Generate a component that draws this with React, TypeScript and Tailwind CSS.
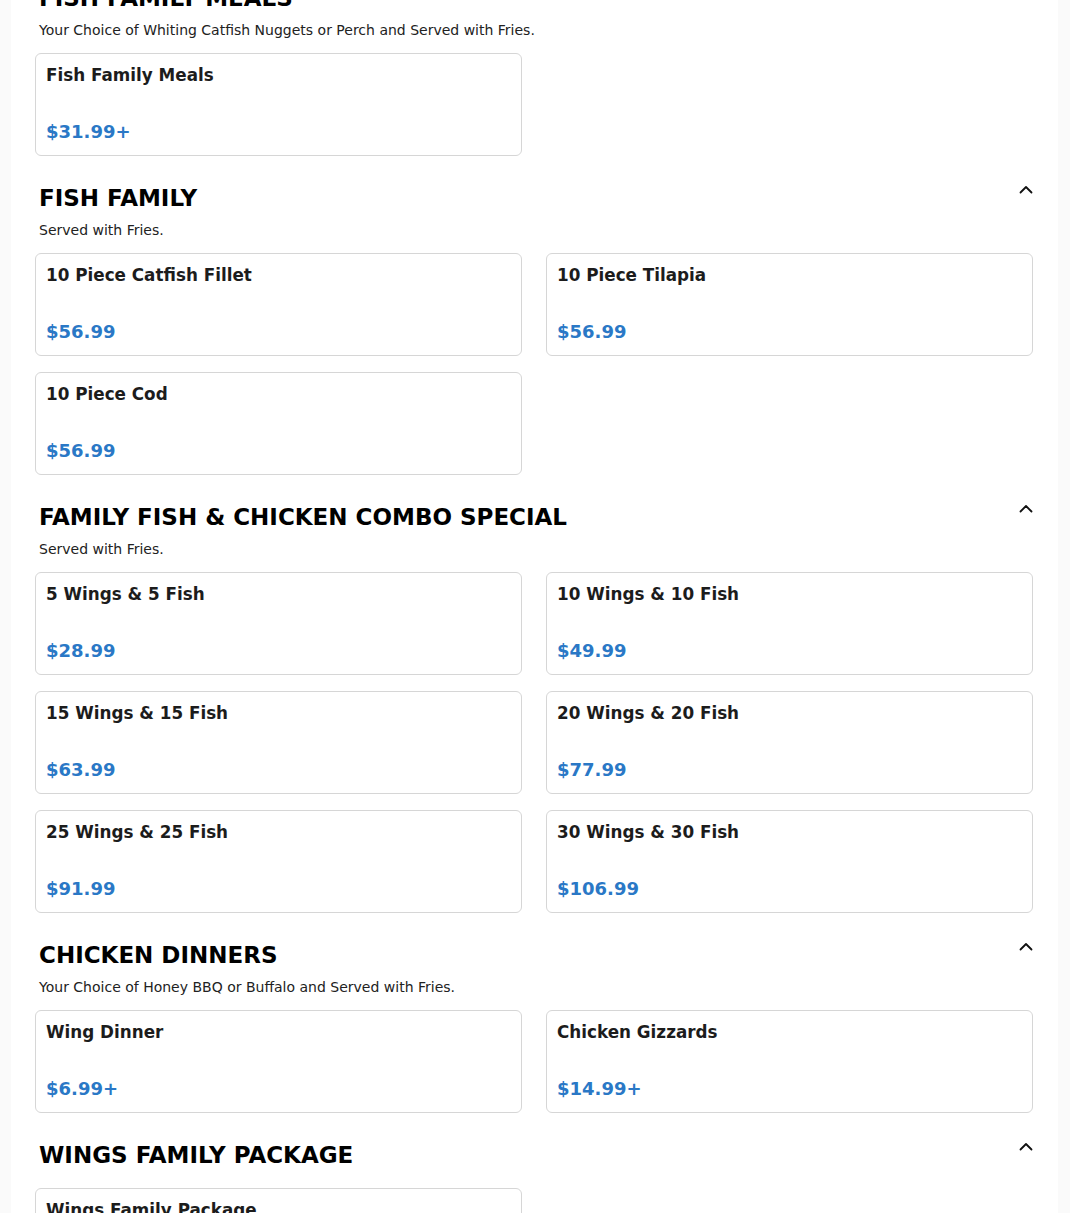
import React from "react";

type Item = { name: string; price: string };
type Section = { title: string; desc?: string; items: Item[] };

const sections: Section[] = [
  {
    title: "FISH FAMILY MEALS",
    desc: "Your Choice of Whiting Catfish Nuggets or Perch and Served with Fries.",
    items: [{ name: "Fish Family Meals", price: "$31.99+" }],
  },
  {
    title: "FISH FAMILY",
    desc: "Served with Fries.",
    items: [
      { name: "10 Piece Catfish Fillet", price: "$56.99" },
      { name: "10 Piece Tilapia", price: "$56.99" },
      { name: "10 Piece Cod", price: "$56.99" },
    ],
  },
  {
    title: "FAMILY FISH & CHICKEN COMBO SPECIAL",
    desc: "Served with Fries.",
    items: [
      { name: "5 Wings & 5 Fish", price: "$28.99" },
      { name: "10 Wings & 10 Fish", price: "$49.99" },
      { name: "15 Wings & 15 Fish", price: "$63.99" },
      { name: "20 Wings & 20 Fish", price: "$77.99" },
      { name: "25 Wings & 25 Fish", price: "$91.99" },
      { name: "30 Wings & 30 Fish", price: "$106.99" },
    ],
  },
  {
    title: "CHICKEN DINNERS",
    desc: "Your Choice of Honey BBQ or Buffalo and Served with Fries.",
    items: [
      { name: "Wing Dinner", price: "$6.99+" },
      { name: "Chicken Gizzards", price: "$14.99+" },
    ],
  },
  {
    title: "WINGS FAMILY PACKAGE",
    items: [{ name: "Wings Family Package", price: "$39.99+" }],
  },
];

function Chevron() {
  return (
    <svg width="16" height="16" viewBox="0 0 16 16" fill="none" className="-mr-[1px] -mt-[2px] shrink-0">
      <path d="M2.5 10.5 L8 5 L13.5 10.5" stroke="#111" strokeWidth="1.8" strokeLinecap="round" strokeLinejoin="round" />
    </svg>
  );
}

function Card({ item }: { item: Item }) {
  return (
    <div className="flex h-[103px] flex-col justify-between rounded-[6px] border border-[#d6d6d6] bg-white pl-[10px] pr-[10px] pt-[10px] pb-[11px]">
      <div className="text-[16.8px] font-bold leading-[22px] text-[#1c1c1c]">{item.name}</div>
      <div className="text-[18px] font-bold leading-[24px] text-[#2a78c6]">{item.price}</div>
    </div>
  );
}

export default function App() {
  return (
    <div className="min-h-screen bg-[#fafafa]" style={{ fontFamily: '"DejaVu Sans", "Liberation Sans", sans-serif' }}>
      <div className="ml-[11px] h-[1213px] w-[1047px] overflow-hidden bg-white pl-[24px] pr-[25px]">
        <div className="-mt-[44px]">
          {sections.map((s) => (
            <section key={s.title} className="pt-[28px]">
              <div className="flex items-start justify-between pl-[4px]">
                <h2 className="text-[23px] font-bold leading-[28px] text-black">{s.title}</h2>
                <Chevron />
              </div>
              {s.desc ? (
                <p className="mt-[8px] pl-[4px] text-[14px] leading-[20px] text-[#222]">{s.desc}</p>
              ) : null}
              <div className={`grid grid-cols-2 gap-x-[24px] gap-y-[16px] ${s.desc ? "mt-[13px]" : "mt-[19px]"}`}>
                {s.items.map((it) => (
                  <Card key={it.name} item={it} />
                ))}
              </div>
            </section>
          ))}
        </div>
      </div>
    </div>
  );
}
